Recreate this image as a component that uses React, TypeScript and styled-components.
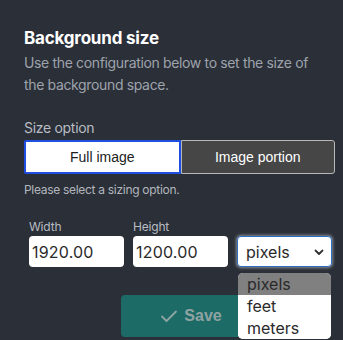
import React, { useState } from 'react';
import styled, { createGlobalStyle } from 'styled-components';

const GlobalStyle = createGlobalStyle`
  html, body {
    margin: 0;
    padding: 0;
    background: #2a2f38;
  }
  body {
    font-family: Inter, "Noto Sans", sans-serif;
  }
`;

const units = ['pixels', 'feet', 'meters'];

function App() {
  const [option, setOption] = useState('full');
  const [unit, setUnit] = useState('pixels');

  return (
    <>
      <GlobalStyle />
      <Panel>
        <Title>Background size</Title>
        <Description>
          Use the configuration below to set the size of the background space.
        </Description>

        <Label>Size option</Label>
        <Toggle>
          <ToggleButton
            active={option === 'full'}
            onClick={() => setOption('full')}
          >
            Full image
          </ToggleButton>
          <ToggleButton
            active={option === 'portion'}
            onClick={() => setOption('portion')}
          >
            Image portion
          </ToggleButton>
        </Toggle>
        <Hint>Please select a sizing option.</Hint>

        <Fields>
          <Field>
            <SmallLabel>Width</SmallLabel>
            <Input defaultValue="1920.00" />
          </Field>
          <Field>
            <SmallLabel>Height</SmallLabel>
            <Input defaultValue="1200.00" />
          </Field>
          <Field>
            <SmallLabel>&nbsp;</SmallLabel>
            <SelectWrap>
              <SelectBox>
                {unit}
                <svg width="12" height="12" viewBox="0 0 12 12">
                  <path
                    d="M2.5 4.5 L6 8 L9.5 4.5"
                    fill="none"
                    stroke="#333"
                    strokeWidth="1.8"
                    strokeLinecap="round"
                    strokeLinejoin="round"
                  />
                </svg>
              </SelectBox>
              <Menu>
                {units.map((u) => (
                  <MenuItem
                    key={u}
                    selected={u === unit}
                    onClick={() => setUnit(u)}
                  >
                    {u}
                  </MenuItem>
                ))}
              </Menu>
            </SelectWrap>
          </Field>
        </Fields>

        <Actions>
          <SaveButton disabled>
            <svg width="18" height="14" viewBox="0 0 18 14">
              <path
                d="M2 7.5 L6.5 12 L16 2.5"
                fill="none"
                stroke="currentColor"
                strokeWidth="1.8"
                strokeLinecap="round"
                strokeLinejoin="round"
              />
            </svg>
            Save
          </SaveButton>
        </Actions>
      </Panel>
    </>
  );
}

const Panel = styled.div`
  padding: 27px 8px 0 24px;
  height: 340px;
  box-sizing: border-box;
  overflow: hidden;
`;

const Title = styled.h2`
  margin: 0;
  font-size: 17px;
  line-height: 22px;
  font-weight: 700;
  color: #ffffff;
  letter-spacing: -0.2px;
`;

const Description = styled.p`
  margin: 3px 0 0;
  width: 300px;
  font-size: 14px;
  line-height: 22px;
  color: #9ea3ab;
  letter-spacing: -0.35px;
`;

const Label = styled.div`
  margin-top: 23px;
  font-size: 14px;
  line-height: 18px;
  color: #b9bdc3;
  letter-spacing: -0.3px;
`;

const Toggle = styled.div`
  margin-top: 3px;
  display: flex;
  width: 311px;
`;

const ToggleButton = styled.button<{ active: boolean }>`
  flex: 1;
  height: 34px;
  box-sizing: border-box;
  font-family: "Liberation Sans", Arial, sans-serif;
  font-size: 14px;
  cursor: pointer;
  border-radius: ${(p) => (p.active ? '2px 0 0 2px' : '0 3px 3px 0')};
  border: ${(p) => (p.active ? '2px solid #1e4fe0' : '1px solid #b8b8b8')};
  background: ${(p) => (p.active ? '#ffffff' : '#464646')};
  color: ${(p) => (p.active ? '#222222' : '#ffffff')};
`;

const Hint = styled.div`
  margin-top: 8px;
  font-size: 12px;
  line-height: 16px;
  color: #b3b7bd;
  letter-spacing: -0.3px;
`;

const Fields = styled.div`
  margin-top: 21px;
  padding-left: 5px;
  display: flex;
  gap: 9px;
`;

const Field = styled.div`
  display: flex;
  flex-direction: column;
  width: 95px;
`;

const SmallLabel = styled.label`
  font-size: 12px;
  line-height: 15px;
  color: #b9bdc3;
  margin-bottom: 2px;
  letter-spacing: -0.2px;
`;

const Input = styled.input`
  box-sizing: border-box;
  width: 95px;
  height: 31px;
  padding: 0 3px;
  border: none;
  border-radius: 4px;
  background: #ffffff;
  font-family: Inter, "Noto Sans", sans-serif;
  font-size: 16px;
  color: #2a2a2a;
  letter-spacing: 0.2px;
  outline: none;
`;

const SelectWrap = styled.div`
  position: relative;
`;

const SelectBox = styled.div`
  box-sizing: border-box;
  width: 95px;
  height: 31px;
  padding: 0 6px 0 8px;
  display: flex;
  align-items: center;
  justify-content: space-between;
  background: #ffffff;
  border: 1px solid #2b6fc4;
  border-radius: 4px;
  box-shadow: 0 0 3px 1px rgba(255, 255, 255, 0.45);
  font-size: 16px;
  color: #2a2a2a;
`;

const Menu = styled.ul`
  position: absolute;
  top: 37px;
  left: 1px;
  width: 93px;
  margin: 0;
  padding: 0;
  list-style: none;
  background: #ffffff;
  border-radius: 5px;
  overflow: hidden;
  z-index: 10;
`;

const MenuItem = styled.li<{ selected: boolean }>`
  height: 22px;
  line-height: 22px;
  padding: 0 9px;
  font-size: 16px;
  color: #2a2a2a;
  cursor: pointer;
  background: ${(p) => (p.selected ? '#808080' : '#ffffff')};
`;

const Actions = styled.div`
  margin-top: 28px;
  padding-left: 97px;
`;

const SaveButton = styled.button`
  display: flex;
  align-items: center;
  justify-content: center;
  gap: 6px;
  width: 140px;
  height: 42px;
  border: none;
  border-radius: 4px;
  background: #1c6b67;
  color: #8fa3a2;
  font-family: "Liberation Sans", Arial, sans-serif;
  font-size: 16px;
  font-weight: 700;
`;

export default App;
